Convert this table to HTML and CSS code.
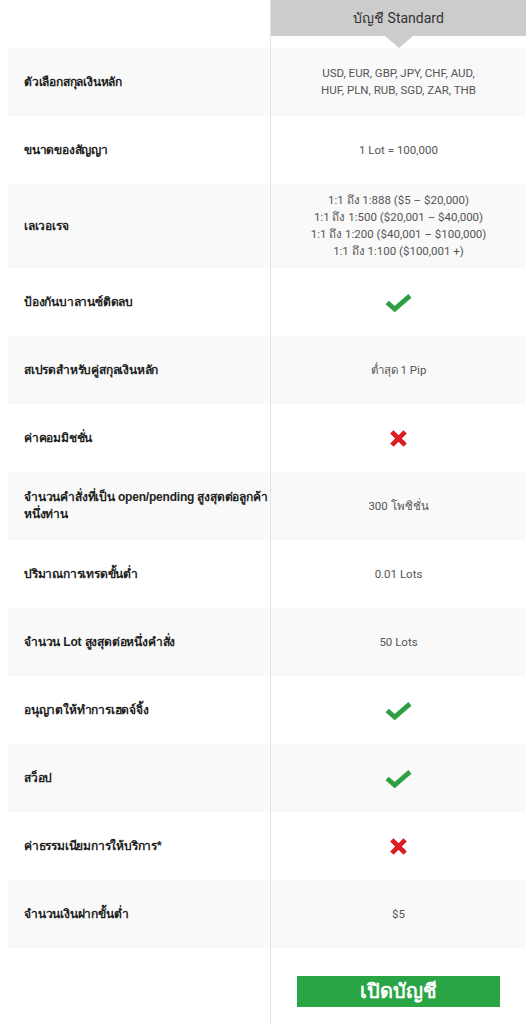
FILE: index.html
```html
<!DOCTYPE html>
<html lang="th">
<head>
<meta charset="utf-8">
<link rel="stylesheet" href="styles.css">
</head>
<body>
<div class="table">
  <div class="row head">
    <div class="label"></div>
    <div class="value"><div class="acct">บัญชี Standard</div><div class="arrow"></div></div>
  </div>
  <div class="row alt">
    <div class="label">ตัวเลือกสกุลเงินหลัก</div>
    <div class="value">USD, EUR, GBP, JPY, CHF, AUD,<br>HUF, PLN, RUB, SGD, ZAR, THB</div>
  </div>
  <div class="row">
    <div class="label">ขนาดของสัญญา</div>
    <div class="value">1 Lot = 100,000</div>
  </div>
  <div class="row alt">
    <div class="label">เลเวอเรจ</div>
    <div class="value">1:1 ถึง 1:888 ($5 – $20,000)<br>1:1 ถึง 1:500 ($20,001 – $40,000)<br>1:1 ถึง 1:200 ($40,001 – $100,000)<br>1:1 ถึง 1:100 ($100,001 +)</div>
  </div>
  <div class="row">
    <div class="label">ป้องกันบาลานซ์ติดลบ</div>
    <div class="value"><svg class="check" viewBox="0 0 28 20"><path d="M2 10 L10 17 L26 3" fill="none" stroke="#2ea043" stroke-width="5"/></svg></div>
  </div>
  <div class="row alt">
    <div class="label">สเปรดสำหรับคู่สกุลเงินหลัก</div>
    <div class="value">ต่ำสุด 1 Pip</div>
  </div>
  <div class="row">
    <div class="label">ค่าคอมมิชชั่น</div>
    <div class="value"><svg class="cross" viewBox="0 0 20 20"><path d="M3 3 L17 17 M17 3 L3 17" fill="none" stroke="#dc1d23" stroke-width="5"/></svg></div>
  </div>
  <div class="row alt">
    <div class="label">จำนวนคำสั่งที่เป็น open/pending สูงสุดต่อลูกค้าหนึ่งท่าน</div>
    <div class="value">300 โพซิชั่น</div>
  </div>
  <div class="row">
    <div class="label">ปริมาณการเทรดขั้นต่ำ</div>
    <div class="value">0.01 Lots</div>
  </div>
  <div class="row alt">
    <div class="label">จำนวน Lot สูงสุดต่อหนึ่งคำสั่ง</div>
    <div class="value">50 Lots</div>
  </div>
  <div class="row">
    <div class="label">อนุญาตให้ทำการเฮดจ์จิ้ง</div>
    <div class="value"><svg class="check" viewBox="0 0 28 20"><path d="M2 10 L10 17 L26 3" fill="none" stroke="#2ea043" stroke-width="5"/></svg></div>
  </div>
  <div class="row alt">
    <div class="label">สว็อป</div>
    <div class="value"><svg class="check" viewBox="0 0 28 20"><path d="M2 10 L10 17 L26 3" fill="none" stroke="#2ea043" stroke-width="5"/></svg></div>
  </div>
  <div class="row">
    <div class="label">ค่าธรรมเนียมการให้บริการ*</div>
    <div class="value"><svg class="cross" viewBox="0 0 20 20"><path d="M3 3 L17 17 M17 3 L3 17" fill="none" stroke="#dc1d23" stroke-width="5"/></svg></div>
  </div>
  <div class="row alt">
    <div class="label">จำนวนเงินฝากขั้นต่ำ</div>
    <div class="value">$5</div>
  </div>
  <div class="row foot">
    <div class="label"></div>
    <div class="value"><a class="btn" href="#">เปิดบัญชี</a></div>
  </div>
</div>
</body>
</html>
```

FILE: styles.css
```css
html, body {
  margin: 0;
  padding: 0;
  background: #fff;
}
body {
  font-family: Roboto, "Liberation Sans", sans-serif;
}
.table {
  padding-left: 8px;
}
.row {
  display: grid;
  grid-template-columns: 262px 1fr;
  min-height: 68px;
}
.row.alt {
  background: #f9f9f9;
}
.label {
  display: flex;
  align-items: center;
  padding: 0 0 0 16px;
  font-family: "Liberation Sans", Arial, sans-serif;
  font-weight: bold;
  font-size: 12px;
  letter-spacing: -0.2px;
  line-height: 17px;
  color: #222;
}
.value {
  border-left: 1px solid #e2e2e2;
  display: flex;
  flex-direction: column;
  align-items: center;
  justify-content: center;
  text-align: center;
  padding: 8px 4px;
  font-size: 11.5px;
  line-height: 17px;
  color: #555;
}
.row.head {
  min-height: 48px;
  background: #fff;
}
.row.head .value {
  padding: 0;
  justify-content: flex-start;
  align-items: stretch;
}
.acct {
  height: 36px;
  background: #cccccc;
  color: #333;
  font-size: 14px;
  display: flex;
  align-items: center;
  justify-content: center;
}
.arrow {
  align-self: center;
  width: 0;
  height: 0;
  border-left: 14px solid transparent;
  border-right: 14px solid transparent;
  border-top: 12px solid #cccccc;
}
.check {
  width: 27px;
  height: 19px;
}
.cross {
  width: 19px;
  height: 19px;
}
.row.foot {
  min-height: 77px;
}
.row.foot .value {
  justify-content: flex-start;
  padding: 28px 0 0;
}
.btn {
  display: flex;
  align-items: center;
  justify-content: center;
  width: 203px;
  height: 31px;
  background: #2aa545;
  color: #fff;
  font-family: "Liberation Sans", Arial, sans-serif;
  font-weight: bold;
  font-size: 20px;
  text-decoration: none;
}
```
